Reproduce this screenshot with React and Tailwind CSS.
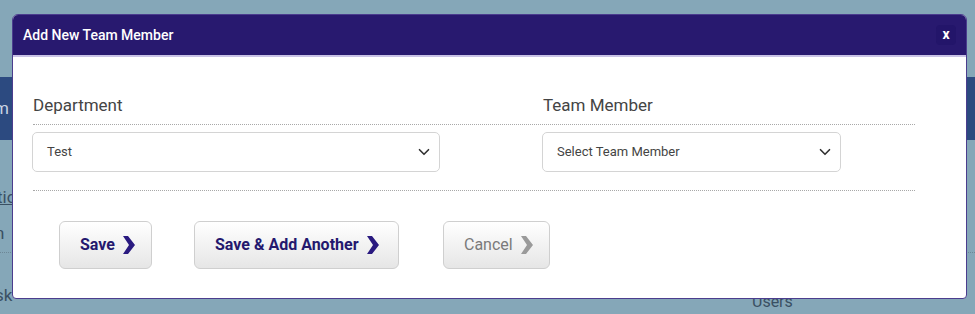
import React from 'react';

const Chevron = ({ color }) => (
  <svg width="12" height="18" viewBox="0 0 12 18" className="ml-[8px]">
    <polygon points="0,0 5,0 12,9 5,18 0,18 6,9" fill={color} />
  </svg>
);

const SelectBox = ({ value, width }) => (
  <div
    className={`flex h-[40px] items-center justify-between rounded-[5px] border border-[#d4d4d4] bg-white pl-[14px] pr-[6px] text-[13px] text-[#444] ${width}`}
  >
    <span>{value}</span>
    <svg width="18" height="18" viewBox="0 0 24 24" fill="none" stroke="#333" strokeWidth="2.2" strokeLinecap="round" strokeLinejoin="round">
      <path d="M6 9l6 6 6-6" />
    </svg>
  </div>
);

const ActionButton = ({ label, muted, className }) => (
  <button
    className={`flex h-[48px] items-center rounded-[6px] border border-[#cfcfcf] bg-gradient-to-b from-white to-[#e6e6e6] pl-[20px] pr-[16px] text-[16px] ${
      muted ? 'font-normal text-[#7a7a7a]' : 'font-bold text-[#24186e]'
    } ${className}`}
  >
    {label}
    <Chevron color={muted ? '#9a9a9a' : '#2a1a80'} />
  </button>
);

export default function App() {
  return (
    <div className="relative h-[314px] w-[975px] overflow-hidden bg-[#85a7b8] font-['Roboto',sans-serif]">
      {/* page behind the dialog */}
      <div className="pt-[77px]">
        <div className="flex h-[63px] items-center bg-[#2c4a80] text-[17px] text-[#c9d3e3]">
          <span className="-ml-[6px]">m</span>
        </div>
        <div className="mt-[45px] text-[17px] text-[#3a5063] underline">
          <span className="-ml-[3px]">tio</span>
        </div>
        <div className="mt-[10px] border-b border-dotted border-[#6d8796] pb-[6px] text-[17px] text-[#3a5063]">
          <span className="-ml-[5px]">n</span>
        </div>
        <div className="mt-[30px] flex text-[17px] text-[#3a5063]">
          <span className="-ml-[5px] w-[757px]">sk</span>
          <span className="mt-[7px] text-[16px]">Users</span>
        </div>
      </div>

      {/* dialog */}
      <div className="absolute left-[12px] top-[14px] flex h-[285px] w-[955px] flex-col overflow-hidden rounded-[6px] rounded-b-[4px] border border-[#4b3d8e] bg-white">
        <div className="flex h-[42px] items-center justify-between border-b-2 border-[#c9c2e6] bg-[#28196f] pl-[10px] pr-[10px]">
          <span className="text-[14px] font-medium text-white">Add New Team Member</span>
          <span className="flex h-[20px] w-[20px] items-center justify-center rounded-[4px] bg-[#23156a] pb-[2px] text-[14px] font-bold text-white">
            x
          </span>
        </div>

        <div className="pl-[20px] pt-[38px]">
          <div className="flex w-[882px] border-b border-dotted border-[#a8a8a8]">
            <div className="w-[510px] pb-[9px] text-[17px] leading-[20px] text-[#444]">Department</div>
            <div className="w-[372px] pb-[9px] text-[17px] leading-[20px] text-[#444]">Team Member</div>
          </div>
          <div className="flex w-[882px] border-b border-dotted border-[#a8a8a8] pb-[18px] pt-[7px]">
            <div className="w-[510px]">
              <SelectBox value="Test" width="w-[408px] -ml-[1px]" />
            </div>
            <div className="w-[372px]">
              <SelectBox value="Select Team Member" width="w-[299px] -ml-[1px]" />
            </div>
          </div>
          <div className="flex pl-[26px] pt-[30px]">
            <ActionButton label="Save" className="w-[93px]" />
            <ActionButton label="Save & Add Another" className="ml-[42px] w-[205px]" />
            <ActionButton label="Cancel" muted className="ml-[44px] w-[107px]" />
          </div>
        </div>
      </div>
    </div>
  );
}
